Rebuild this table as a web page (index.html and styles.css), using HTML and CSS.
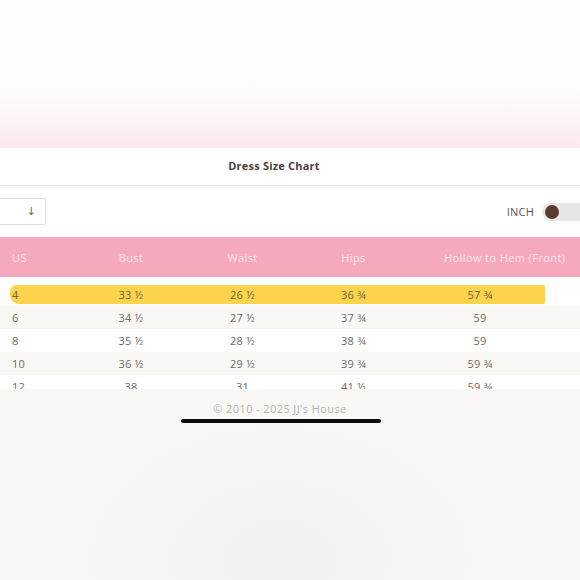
FILE: index.html
```html
<!DOCTYPE html>
<html>
<head>
<meta charset="utf-8">
<link rel="stylesheet" href="styles.css">
</head>
<body>
<div class="page">
  <div class="top-fade"></div>
  <section class="sheet">
    <header class="sheet-title">Dress Size Chart</header>
    <div class="controls">
      <div class="select"><span class="arrow">↓</span></div>
      <div class="unit">
        <span class="unit-label">INCH</span>
        <span class="toggle"><span class="knob"></span></span>
      </div>
    </div>
    <div class="table-wrap">
      <div class="row head">
        <span class="c first">US</span><span class="c">Bust</span><span class="c">Waist</span><span class="c">Hips</span><span class="c wide">Hollow to Hem (Front)</span><span class="c"></span>
      </div>
      <div class="body">
        <div class="row marked"><span class="c first">4</span><span class="c">33 ½</span><span class="c">26 ½</span><span class="c">36 ¾</span><span class="c">57 ¾</span><span class="c"></span></div>
        <div class="row alt"><span class="c first">6</span><span class="c">34 ½</span><span class="c">27 ½</span><span class="c">37 ¾</span><span class="c">59</span><span class="c"></span></div>
        <div class="row"><span class="c first">8</span><span class="c">35 ½</span><span class="c">28 ½</span><span class="c">38 ¾</span><span class="c">59</span><span class="c"></span></div>
        <div class="row alt"><span class="c first">10</span><span class="c">36 ½</span><span class="c">29 ½</span><span class="c">39 ¾</span><span class="c">59 ¾</span><span class="c"></span></div>
        <div class="row"><span class="c first">12</span><span class="c">38</span><span class="c">31</span><span class="c">41 ½</span><span class="c">59 ¾</span><span class="c"></span></div>
      </div>
    </div>
  </section>
  <footer class="footer">© 2010 - 2025 JJ's House</footer>
  <div class="home-bar"></div>
</div>
</body>
</html>
```
FILE: styles.css
```css
html, body {
  margin: 0;
  padding: 0;
}
body {
  width: 580px;
  height: 580px;
  overflow: hidden;
  font-family: "Open Sans", "Liberation Sans", sans-serif;
  background: radial-gradient(ellipse 200px 140px at 280px 560px, #f2f0ec 0%, #f7f5f1 60%, #f9f8f4 100%);
}
.page {
  width: 580px;
  height: 580px;
  display: flex;
  flex-direction: column;
}
.top-fade {
  height: 148px;
  flex: none;
  background: linear-gradient(to bottom, #fdfdfd 0px, #fdfcfc 90px, #fcf3f4 120px, #fae8ec 147px);
}
.sheet {
  background: #ffffff;
  display: flex;
  flex-direction: column;
}
.sheet-title {
  border-bottom: 1px solid #e5e4e4;
  display: flex;
  align-items: center;
  justify-content: center;
  font-size: 11px;
  font-weight: 700;
  letter-spacing: 0.2px;
  color: #4b3f40;
  padding-right: 32px;
  padding-bottom: 3px;
  box-sizing: border-box;
  height: 38px;
}
.controls {
  height: 51px;
  display: flex;
  align-items: center;
  justify-content: space-between;
}
.select {
  height: 25px;
  border: 1px solid #dedede;
  border-left: none;
  border-radius: 0 2px 2px 0;
  display: flex;
  align-items: center;
  justify-content: flex-end;
  padding-right: 9px;
  box-sizing: content-box;
  width: 36px;
}
.arrow {
  font-family: "DejaVu Sans", sans-serif;
  font-size: 11px;
  color: #6a6a6a;
}
.unit {
  display: flex;
  align-items: center;
  gap: 8px;
  margin-right: -8px;
}
.unit-label {
  font-size: 11px;
  color: #5a5656;
  letter-spacing: 0.2px;
}
.toggle {
  width: 43px;
  height: 18px;
  border-radius: 9px;
  background: #e7e6e6;
  display: flex;
  align-items: center;
  padding-left: 3px;
}
.knob {
  width: 14px;
  height: 14px;
  border-radius: 50%;
  background: #5b3a2f;
}
.table-wrap {
  height: 152px;
  overflow: hidden;
}
.row {
  display: grid;
  grid-template-columns: 75px 112px 111px 111px 142px 1fr;
  height: 23px;
  align-items: center;
  font-size: 11px;
  letter-spacing: 0.3px;
  color: #6c6a68;
  position: relative;
}
.row .c {
  text-align: center;
  position: relative;
  white-space: nowrap;
}
.row .c.first {
  text-align: left;
  padding-left: 12px;
}
.row.head {
  height: 40px;
  background: #f6a9bd;
  color: #fde7ed;
  letter-spacing: 0.4px;
}
.row.head .c.wide {
  text-align: left;
  padding-left: 35px;
}
.body {
  padding-top: 6px;
}
.row.alt {
  background: #faf8f5;
}
.row.marked {
  color: #6f5f3a;
}
.row.marked::before {
  content: "";
  position: absolute;
  left: 10px;
  width: 535px;
  top: 2px;
  height: 19px;
  background: #fbd34c;
  border-radius: 7px 2px 2px 9px;
}
.footer {
  margin-top: 13px;
  height: 14px;
  line-height: 14px;
  text-align: center;
  font-size: 11px;
  letter-spacing: 0.4px;
  color: #b4b2af;
  padding-right: 20px;
}
.home-bar {
  margin: 3px 0 0 181px;
  width: 200px;
  height: 4px;
  border-radius: 2px;
  background: #0c0c0c;
}
```
